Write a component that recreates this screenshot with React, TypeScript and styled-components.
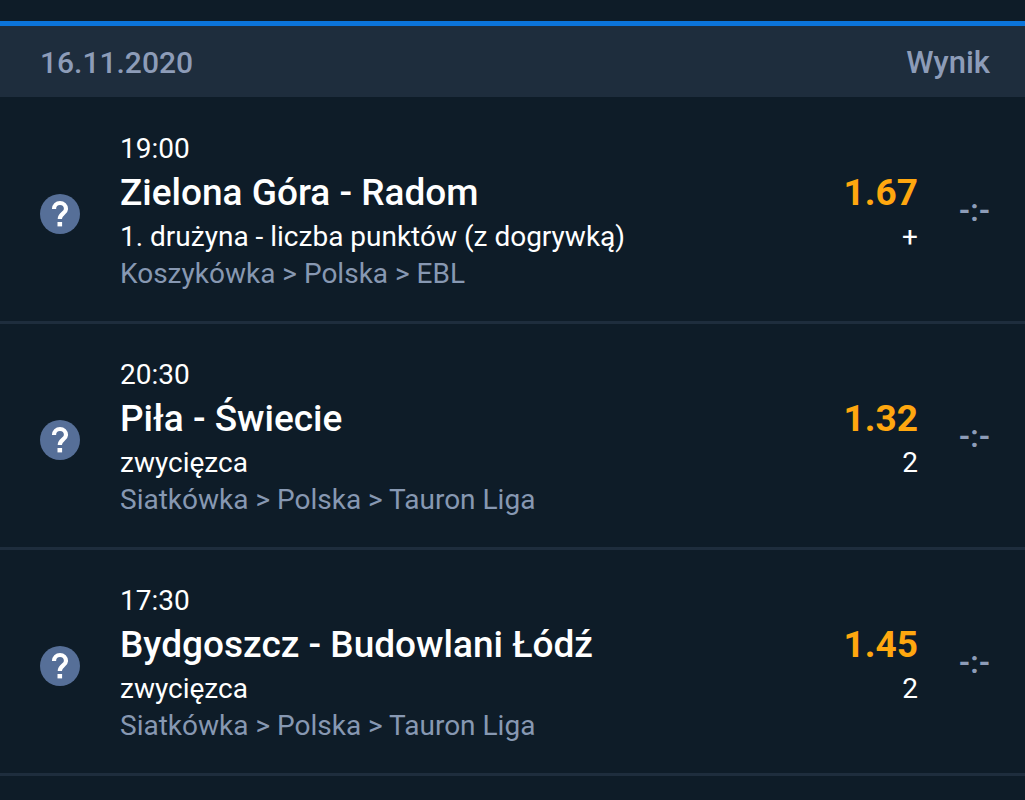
import React from "react";
import styled, { createGlobalStyle } from "styled-components";

const GlobalStyle = createGlobalStyle`
  body {
    margin: 0;
    background: #0e1c28;
    color: #ffffff;
    font-family: Roboto, "Liberation Sans", sans-serif;
  }
  * { box-sizing: border-box; }
`;

const Page = styled.main`
  padding-top: 21px;
`;

const DayHeader = styled.header`
  display: flex;
  align-items: center;
  justify-content: space-between;
  padding: 17px 35px 14px 40px;
  border-top: 5px solid #0b74da;
  background: #1e2d3d;
  color: #8d9cb8;
`;

const HeaderLabel = styled.h2<{ $size: number }>`
  margin: 0;
  font-size: ${(p) => p.$size}px;
  font-weight: 500;
  line-height: 40px;
`;

const BetList = styled.ul`
  margin: 0;
  padding: 1px 0 0;
  list-style: none;
`;

const BetRow = styled.li`
  display: flex;
  align-items: center;
  padding: 32px 35px 29px 40px;
  border-bottom: 3px solid #1e2d3d;
`;

const StatusIcon = styled.svg`
  flex: none;
  width: 40px;
  height: 40px;
  margin: 6px 40px 0 0;
`;

const Details = styled.div`
  flex: 1;
  min-width: 0;
`;

const Line = styled.p<{ $muted?: boolean }>`
  margin: 0;
  font-size: 28px;
  line-height: 37px;
  color: ${(p) => (p.$muted ? "#8798b2" : "#ffffff")};
`;

const Title = styled.h3`
  margin: 0;
  font-size: 37px;
  font-weight: 500;
  line-height: 51px;
`;

const Odds = styled.div`
  text-align: right;
`;

const Rate = styled.strong`
  display: block;
  color: #ffa70f;
  font-size: 37px;
  font-weight: 700;
  line-height: 51px;
`;

const Score = styled.span`
  width: 72px;
  color: #8d9cb8;
  font-size: 31px;
  font-weight: 600;
  line-height: 40px;
  text-align: right;
`;

type Bet = { time: string; teams: string; market: string; league: string; rate: string; pick: string };

const bets: Bet[] = [
  { time: "19:00", teams: "Zielona Góra - Radom", market: "1. drużyna - liczba punktów (z dogrywką)", league: "Koszykówka > Polska > EBL", rate: "1.67", pick: "+" },
  { time: "20:30", teams: "Piła - Świecie", market: "zwycięzca", league: "Siatkówka > Polska > Tauron Liga", rate: "1.32", pick: "2" },
  { time: "17:30", teams: "Bydgoszcz - Budowlani Łódź", market: "zwycięzca", league: "Siatkówka > Polska > Tauron Liga", rate: "1.45", pick: "2" },
];

const PendingIcon = () => (
  <StatusIcon viewBox="0 0 40 40" aria-hidden="true">
    <circle cx="20" cy="20" r="20" fill="#566f98" />
    <path d="M14 15a6 6 0 0 1 12 0c0 4.200-6.200 4.800-6.200 10" fill="none" stroke="#fff" strokeWidth="4.200" />
    <path d="M17.500 28h4.600v4.400h-4.600z" fill="#fff" />
  </StatusIcon>
);

export default function App() {
  return (
    <>
      <GlobalStyle />
      <Page>
        <DayHeader>
          <HeaderLabel $size={30}>16.11.2020</HeaderLabel>
          <HeaderLabel $size={31}>Wynik</HeaderLabel>
        </DayHeader>
        <BetList>
          {bets.map((bet) => (
            <BetRow key={bet.teams}>
              <PendingIcon />
              <Details>
                <Line>{bet.time}</Line>
                <Title>{bet.teams}</Title>
                <Line>{bet.market}</Line>
                <Line $muted>{bet.league}</Line>
              </Details>
              <Odds>
                <Rate>{bet.rate}</Rate>
                <Line>{bet.pick}</Line>
              </Odds>
              <Score>-:-</Score>
            </BetRow>
          ))}
        </BetList>
      </Page>
    </>
  );
}
